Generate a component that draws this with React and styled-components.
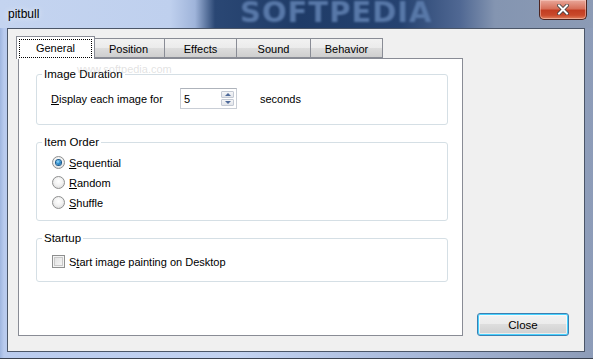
import React from 'react';
import styled, { createGlobalStyle } from 'styled-components';

const GlobalStyle = createGlobalStyle`
  html, body {
    margin: 0;
    padding: 0;
  }
  body {
    width: 593px;
    height: 359px;
    overflow: hidden;
    font-family: "Liberation Sans", Arial, sans-serif;
    font-size: 11px;
    color: #000;
  }
`;

const Window = styled.div`
  position: relative;
  width: 593px;
  height: 359px;
  display: flex;
  flex-direction: column;
  overflow: hidden;
  background: linear-gradient(90deg, #9fb6e0 0px, #b9cbee 4px, #c3d3f1 40%, #a8b9da 70%, #8d9cb8 100%);
  border-bottom: 1px solid #3a4250;
  box-sizing: border-box;
`;

const TitleBar = styled.div`
  position: relative;
  height: 29px;
  display: flex;
  align-items: flex-start;
  justify-content: space-between;
  background: linear-gradient(90deg, #c4d4f0 0px, #bfd0ee 170px, #9fb4da 195px, #2a4774 215px, #1f3b67 300px, #254270 400px, #506893 460px, #8495b1 495px, #8c9bb5 593px);
`;

const Title = styled.span`
  padding: 7px 0 0 8px;
  font-size: 12px;
  color: #000;
  text-shadow: 0 0 6px rgba(255, 255, 255, 0.9);
`;

const Watermark = styled.span`
  position: absolute;
  left: 240px;
  top: -5px;
  font-family: "DejaVu Sans", sans-serif;
  font-weight: bold;
  font-size: 29px;
  letter-spacing: 1px;
  color: #5878a8;
  filter: blur(1.2px);
  pointer-events: none;
`;

const CloseCaption = styled.div`
  width: 48px;
  height: 20px;
  margin-right: 6px;
  box-sizing: border-box;
  border: 1px solid #4d2520;
  border-top: none;
  border-radius: 0 0 5px 5px;
  background: linear-gradient(#e9a89a 0%, #d7705a 45%, #c23d22 55%, #c9492b 80%, #e0805d 100%);
  box-shadow: inset 0 0 0 1px rgba(255, 220, 210, 0.45);
  display: flex;
  align-items: center;
  justify-content: center;
`;

const Frame = styled.div`
  flex: 1;
  display: flex;
  padding: 0 8px 6px 7px;
`;

const Client = styled.div`
  flex: 1;
  display: flex;
  justify-content: space-between;
  align-items: flex-end;
  background: #f0f0f0;
  border: 1px solid #4b5668;
  padding: 8px 15px 15px 10px;
  position: relative;
`;

const TabArea = styled.div`
  width: 445px;
  display: flex;
  flex-direction: column;
`;

const TabStrip = styled.div`
  position: relative;
  z-index: 1;
  height: 21px;
  display: flex;
  align-items: flex-end;
`;

const Tab = styled.div`
  box-sizing: border-box;
  width: ${p => p.$w}px;
  height: ${p => (p.$active ? 23 : 20)}px;
  margin-left: ${p => (p.$first ? (p.$active ? -2 : 0) : -1)}px;
  margin-right: ${p => (p.$active ? -2 : 0)}px;
  margin-bottom: ${p => (p.$active ? -1 : 0)}px;
  position: relative;
  z-index: ${p => (p.$active ? 2 : 1)};
  border: 1px solid #898c95;
  border-bottom: ${p => (p.$active ? 'none' : '1px solid #898c95')};
  background: ${p =>
    p.$active
      ? '#fff'
      : 'linear-gradient(#f2f2f2 0%, #ebebeb 50%, #dddddd 50%, #cfcfcf 100%)'};
  display: flex;
  align-items: center;
  justify-content: center;
  padding-top: ${p => (p.$active ? 0 : 1)}px;
  padding-bottom: ${p => (p.$active ? 1 : 0)}px;
`;

const FocusRect = styled.span`
  position: absolute;
  left: 2px;
  right: 2px;
  top: 2px;
  bottom: 1px;
  border: 1px dotted #000;
`;

const Panel = styled.div`
  position: relative;
  height: 278px;
  box-sizing: border-box;
  background: #fff;
  border: 1px solid #898c95;
  padding: 8px 14px 0 17px;
  display: flex;
  flex-direction: column;
  gap: 10px;
`;

const Group = styled.fieldset`
  box-sizing: border-box;
  height: ${p => p.$h}px;
  margin: 0;
  padding: 0;
  border: 1px solid #d5dfe5;
  border-radius: 3px;
  min-width: 0;
`;

const Legend = styled.legend`
  margin-left: 5px;
  padding: 0 2px;
  font-size: 11.5px;
  line-height: 14px;
`;

const DurationRow = styled.div`
  display: flex;
  align-items: center;
  padding: 7px 0 0 14px;
`;

const RowLabel = styled.span`
  width: 129px;
`;

const Spin = styled.div`
  box-sizing: border-box;
  width: 57px;
  height: 21px;
  border: 1px solid #c9ced6;
  border-top-color: #aeb3bb;
  background: #fff;
  display: flex;
  align-items: center;
  justify-content: space-between;
  padding: 0 2px 0 3px;
`;

const SpinButtons = styled.div`
  display: flex;
  flex-direction: column;
  gap: 1px;
`;

const SpinButton = styled.div`
  width: 13px;
  height: 7px;
  box-sizing: border-box;
  border: 1px solid #c3c9d4;
  border-radius: 1px;
  background: linear-gradient(#f5f6f8, #e2e5ea);
  display: flex;
  align-items: center;
  justify-content: center;
`;

const Arrow = styled.span`
  width: 0;
  height: 0;
  border-left: 3px solid transparent;
  border-right: 3px solid transparent;
  ${p => (p.$down ? 'border-top: 3px solid #4f6a9a;' : 'border-bottom: 3px solid #4f6a9a;')}
`;

const Unit = styled.span`
  margin-left: 23px;
`;

const OptionList = styled.div`
  display: flex;
  flex-direction: column;
  gap: 7px;
  padding: 7px 0 0 15px;
`;

const Option = styled.label`
  display: flex;
  align-items: center;
  gap: 4px;
  height: 13px;
`;

const Radio = styled.span`
  width: 13px;
  height: 13px;
  box-sizing: border-box;
  border-radius: 50%;
  border: 1px solid #8e8f8f;
  background: radial-gradient(circle at 50% 40%, #ffffff 0%, #f2f2f2 45%, #d4d4d4 100%);
  display: flex;
  align-items: center;
  justify-content: center;
  &::after {
    content: '';
    display: ${p => (p.$checked ? 'block' : 'none')};
    width: 5px;
    height: 5px;
    border-radius: 50%;
    background: radial-gradient(circle at 40% 35%, #9ee0ff 0%, #2e8fd0 45%, #145a96 100%);
    box-shadow: 0 0 0 1px #1b5a8c;
  }
`;

const Check = styled.span`
  width: 13px;
  height: 13px;
  box-sizing: border-box;
  border: 1px solid #8e8f8f;
  background: linear-gradient(135deg, #dcdcdc, #fafafa);
  box-shadow: inset 0 0 0 1px #f4f4f4, inset 0 0 0 2px #c9c9c9;
`;

const StartupRow = styled.div`
  padding: 10px 0 0 15px;
`;

const FaintMark = styled.span`
  position: absolute;
  left: ${p => p.$x}px;
  top: ${p => p.$y}px;
  font-family: ${p => p.$serif ? '"Liberation Serif", serif' : '"Liberation Sans", sans-serif'};
  font-size: ${p => p.$size}px;
  letter-spacing: ${p => p.$ls || 0}px;
  color: ${p => p.$color};
  pointer-events: none;
  white-space: nowrap;
`;

const Button = styled.button`
  box-sizing: border-box;
  width: 92px;
  height: 23px;
  font-family: inherit;
  font-size: 11.5px;
  color: #000;
  border: 1px solid #3c7fb1;
  border-radius: 3px;
  background: linear-gradient(#f2f2f2 0%, #ebebeb 50%, #dddddd 50%, #cfcfcf 100%);
  box-shadow: inset 0 0 0 1px #48d2ff, inset 0 0 0 2px rgba(255, 255, 255, 0.6);
  padding: 0;
`;

const tabs = [
  { name: 'General', w: 79 },
  { name: 'Position', w: 73 },
  { name: 'Effects', w: 73 },
  { name: 'Sound', w: 75 },
  { name: 'Behavior', w: 73 },
];

export default function App() {
  return (
    <>
      <GlobalStyle />
      <Window>
        <TitleBar>
          <Title>pitbull</Title>
          <Watermark>SOFTPEDIA</Watermark>
          <CloseCaption>
            <svg width="12" height="11" viewBox="0 0 12 11">
              <path d="M2 1.5 L10 9.5 M10 1.5 L2 9.5" stroke="#3b3b3b" strokeWidth="3.6" strokeLinecap="square" />
              <path d="M2 1.5 L10 9.5 M10 1.5 L2 9.5" stroke="#ffffff" strokeWidth="2" strokeLinecap="square" />
            </svg>
          </CloseCaption>
        </TitleBar>
        <Frame>
          <Client>
            <FaintMark $x={52} $y={22} $size={21} $ls={1} $serif $color="rgba(255,255,255,0.7)">SOFTPEDIA</FaintMark>
            <TabArea>
              <TabStrip>
                {tabs.map((t, i) => (
                  <Tab key={t.name} $w={t.w} $first={i === 0} $active={i === 0}>
                    {i === 0 && <FocusRect />}
                    {t.name}
                  </Tab>
                ))}
              </TabStrip>
              <Panel>
                <FaintMark $x={58} $y={4} $size={11} $color="rgba(170,170,170,0.35)">www.softpedia.com</FaintMark>
                <Group $h={58}>
                  <Legend>Image Duration</Legend>
                  <DurationRow>
                    <RowLabel><u>D</u>isplay each image for</RowLabel>
                    <Spin>
                      <span>5</span>
                      <SpinButtons>
                        <SpinButton><Arrow /></SpinButton>
                        <SpinButton><Arrow $down /></SpinButton>
                      </SpinButtons>
                    </Spin>
                    <Unit>seconds</Unit>
                  </DurationRow>
                </Group>
                <Group $h={86}>
                  <Legend>Item Order</Legend>
                  <OptionList>
                    <Option><Radio $checked /><span><u>S</u>equential</span></Option>
                    <Option><Radio /><span><u>R</u>andom</span></Option>
                    <Option><Radio /><span><u>S</u>huffle</span></Option>
                  </OptionList>
                </Group>
                <Group $h={51}>
                  <Legend>Startup</Legend>
                  <StartupRow>
                    <Option><Check /><span>S<u>t</u>art image painting on Desktop</span></Option>
                  </StartupRow>
                </Group>
              </Panel>
            </TabArea>
            <Button>Close</Button>
          </Client>
        </Frame>
      </Window>
    </>
  );
}
